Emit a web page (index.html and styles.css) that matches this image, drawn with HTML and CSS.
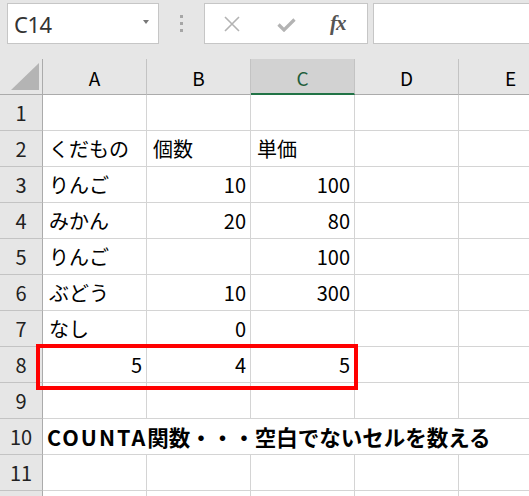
FILE: index.html
```html
<!DOCTYPE html>
<html lang="ja">
<head>
<meta charset="utf-8">
<link rel="stylesheet" href="styles.css">
</head>
<body>
<div class="app">
  <div class="toolbar">
    <div class="namebox"><span class="name">C14</span><span class="caret"></span></div>
    <div class="grip"><i></i><i></i><i></i></div>
    <div class="fbtns">
      <svg class="ico-x" width="18" height="16" viewBox="0 0 18 16"><path d="M2 1 L16 15 M16 1 L2 15" stroke="#b3b3b3" stroke-width="1.6" fill="none"/></svg>
      <svg class="ico-ok" width="19" height="14" viewBox="0 0 19 14"><path d="M1.5 6.5 L7 12 L17.5 1.5" stroke="#b3b3b3" stroke-width="3.2" fill="none"/></svg>
      <span class="fx">fx</span>
    </div>
    <div class="finput"></div>
  </div>
  <div class="sheet">
    <div class="corner"><svg width="42" height="35" viewBox="0 0 42 35"><polygon points="11,31 39,31 39,4" fill="#b4b4b4"/></svg></div>
    <div class="ch">A</div><div class="ch">B</div><div class="ch sel">C</div><div class="ch">D</div><div class="ch">E</div>

    <div class="rh">1</div><div class="c"></div><div class="c"></div><div class="c"></div><div class="c"></div><div class="c"></div>
    <div class="rh">2</div><div class="c">くだもの</div><div class="c">個数</div><div class="c">単価</div><div class="c"></div><div class="c"></div>
    <div class="rh">3</div><div class="c">りんご</div><div class="c n">10</div><div class="c n">100</div><div class="c"></div><div class="c"></div>
    <div class="rh">4</div><div class="c">みかん</div><div class="c n">20</div><div class="c n">80</div><div class="c"></div><div class="c"></div>
    <div class="rh">5</div><div class="c">りんご</div><div class="c n"></div><div class="c n">100</div><div class="c"></div><div class="c"></div>
    <div class="rh">6</div><div class="c">ぶどう</div><div class="c n">10</div><div class="c n">300</div><div class="c"></div><div class="c"></div>
    <div class="rh">7</div><div class="c">なし</div><div class="c n">0</div><div class="c n"></div><div class="c"></div><div class="c"></div>
    <div class="rh">8</div><div class="c n">5</div><div class="c n">4</div><div class="c n">5</div><div class="c"></div><div class="c"></div>
    <div class="rh">9</div><div class="c"></div><div class="c"></div><div class="c"></div><div class="c"></div><div class="c"></div>
    <div class="rh">10</div><div class="c wide"><span class="lat">COUNTA</span>関数・・・空白でないセルを数える</div>
    <div class="rh">11</div><div class="c"></div><div class="c"></div><div class="c"></div><div class="c"></div><div class="c"></div>
    <div class="rh"></div><div class="c"></div><div class="c"></div><div class="c"></div><div class="c"></div><div class="c"></div>
  </div>
  <div class="highlight"></div>
</div>
</body>
</html>
```
FILE: styles.css
```css
* { box-sizing: border-box; }
html, body { margin: 0; padding: 0; }
body {
  width: 529px;
  height: 496px;
  overflow: hidden;
  background: #e6e6e6;
  font-family: "Noto Sans CJK JP", "Noto Sans", sans-serif;
  color: #000;
}
.app {
  position: relative;
  width: 529px;
  height: 496px;
  overflow: hidden;
}
.toolbar {
  height: 59px;
  display: flex;
  align-items: flex-start;
  padding-top: 3px;
  background: #e6e6e6;
}
.namebox {
  margin-left: 7px;
  width: 152px;
  height: 41px;
  background: #fff;
  border: 1px solid #c6c6c6;
  display: flex;
  align-items: center;
  justify-content: space-between;
  padding: 0 9px 0 6px;
}
.name {
  font-family: "Noto Sans", "Liberation Sans", sans-serif;
  font-size: 22px;
  color: #333;
  letter-spacing: -0.5px;
}
.caret {
  width: 0;
  height: 0;
  border-left: 3.5px solid transparent;
  border-right: 3.5px solid transparent;
  border-top: 4px solid #777;
  margin-top: -3px;
}
.grip {
  width: 45px;
  height: 41px;
  display: flex;
  flex-direction: column;
  align-items: center;
  justify-content: center;
  gap: 4px;
}
.grip i {
  display: block;
  width: 3px;
  height: 3px;
  background: #a6a6a6;
}
.fbtns {
  width: 164px;
  height: 41px;
  background: #fff;
  border: 1px solid #c6c6c6;
  display: flex;
  align-items: center;
  padding-left: 18px;
}
.ico-x { margin-top: 1px; }
.ico-ok { margin-left: 36px; margin-top: 3px; }
.fx {
  margin-left: 34px;
  font-family: "Liberation Serif", serif;
  font-style: italic;
  font-weight: bold;
  font-size: 21px;
  color: #555;
  letter-spacing: -1px;
}
.finput {
  margin-left: 5px;
  flex: 1;
  height: 41px;
  background: #fff;
  border: 1px solid #c6c6c6;
  border-right: none;
}
.sheet {
  display: grid;
  grid-template-columns: 43px repeat(5, 104px);
  grid-auto-rows: 36px;
  background: #fff;
  width: 563px;
}
.corner {
  background: #e6e6e6;
  border-right: 1px solid #ababab;
  border-bottom: 1px solid #ababab;
}
.corner svg { display: block; }
.ch {
  background: #e6e6e6;
  border-right: 1px solid #c3c3c3;
  border-bottom: 1px solid #ababab;
  text-align: center;
  font-size: 19px;
  line-height: 37px;
  color: #000;
}
.ch.sel {
  background: #d2d2d2;
  border-bottom: 2px solid #217346;
  color: #1e5e3b;
}
.rh {
  background: #e6e6e6;
  border-right: 1px solid #ababab;
  border-bottom: 1px solid #c3c3c3;
  text-align: center;
  font-size: 20px;
  line-height: 36px;
  color: #222;
}
.c {
  border-right: 1px solid #d4d4d4;
  border-bottom: 1px solid #d4d4d4;
  font-size: 20px;
  line-height: 36px;
  padding: 0 5px 0 6px;
  white-space: nowrap;
}
.n { text-align: right; padding-right: 4px; }
.wide {
  grid-column: span 5;
  font-weight: bold;
  font-size: 21.5px;
  padding-left: 4px;
}
.lat { letter-spacing: 2px; }
.highlight {
  position: absolute;
  left: 36px;
  top: 344px;
  width: 322px;
  height: 46px;
  border: 4px solid #ff0000;
}
```
